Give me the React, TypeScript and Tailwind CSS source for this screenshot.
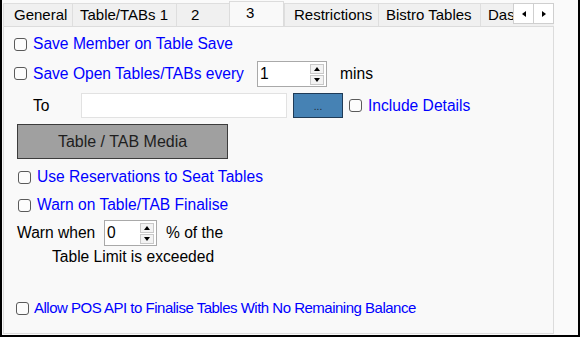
import React from 'react';

const font = { fontFamily: '"Liberation Sans", Arial, sans-serif' };

function Check() {
  return <span className="inline-block h-[13px] w-[13px] shrink-0 rounded-[3px] border border-[#5a5a5a] bg-[#fcfcfc]" />;
}

function Spin({ value, width }: { value: string; width: string }) {
  return (
    <div className={`relative flex h-[26px] ${width} items-center border border-[#a9a9a9] bg-white pl-[2px] text-black`}>
      {value}
      <div className="absolute right-[2px] top-[2px] flex flex-col gap-[1px]">
        <span className="flex h-[10px] w-[14px] items-center justify-center border border-[#c8c8c8] bg-[#f3f3f3]">
          <span className="h-0 w-0 border-x-[3px] border-b-[4px] border-x-transparent border-b-black" />
        </span>
        <span className="flex h-[10px] w-[14px] items-center justify-center border border-[#c8c8c8] bg-[#f3f3f3]">
          <span className="h-0 w-0 border-x-[3px] border-t-[4px] border-x-transparent border-t-black" />
        </span>
      </div>
    </div>
  );
}

const tabs = [
  { label: 'General', w: 'w-[69px]', pl: 'pl-[10px]' },
  { label: 'Table/TABs 1', w: 'w-[104px]', pl: 'pl-[7px]' },
  { label: '2', w: 'w-[53px]', pl: 'pl-[14px]' },
  { label: '3', w: 'w-[55px]', pl: 'pl-[16px]', active: true },
  { label: 'Restrictions', w: 'w-[94px]', pl: 'pl-[9px]' },
  { label: 'Bistro Tables', w: 'w-[102px]', pl: 'pl-[7px]' },
  { label: 'Dashboard', w: 'w-[90px]', pl: 'pl-[7px]' },
];

export default function App() {
  return (
    <div
      className="relative h-[337px] w-[580px] overflow-hidden border-x-2 border-b-2 border-black bg-[#fafafa] text-[15.6px]"
      style={font}
    >
      {/* Tabs */}
      <div className="relative z-10 flex h-[26px] w-[552px] overflow-hidden pl-px text-[15px]">
        {tabs.map((t) =>
          t.active ? (
            <div
              key={t.label}
              className={`mt-[1px] flex h-[26px] shrink-0 items-center ${t.w} ${t.pl} border-x border-t border-[#dcdcdc] bg-[#f9f9f9] pb-[2px] text-black`}
            >
              {t.label}
            </div>
          ) : (
            <div
              key={t.label}
              className={`mt-[3px] flex h-[23px] shrink-0 items-center ${t.w} ${t.pl} whitespace-nowrap border-l border-t border-[#dedede] bg-[#f0f0f0] text-black`}
            >
              {t.label}
            </div>
          )
        )}
        <div className="absolute left-[511px] top-[3px] flex h-[21px] w-[41px] border border-[#cfcfcf] bg-white">
          <span className="flex w-[20px] items-center justify-center border-r border-[#cfcfcf]">
            <span className="h-0 w-0 border-y-[3px] border-r-[4px] border-y-transparent border-r-black" />
          </span>
          <span className="flex flex-1 items-center justify-center">
            <span className="h-0 w-0 border-y-[3px] border-l-[4px] border-y-transparent border-l-black" />
          </span>
        </div>
      </div>

      {/* Panel */}
      <div className="ml-px h-[308px] w-[551px] border border-[#dcdcdc] bg-[#f9f9f9]">
        <div className="mt-[5px] flex h-[24px] items-center gap-[6px] pl-[10px] text-[#0000ff]">
          <Check />
          <span>Save Member on Table Save</span>
        </div>

        <div className="mt-[5px] flex h-[26px] items-center pl-[10px]">
          <div className="flex w-[243px] items-center gap-[6px] text-[#0000ff]">
            <Check />
            <span>Save Open Tables/TABs every</span>
          </div>
          <Spin value="1" width="w-[70px]" />
          <span className="ml-[13px] text-black">mins</span>
        </div>

        <div className="mt-[6px] flex h-[25px] items-center pl-[29px]">
          <span className="w-[48px] text-black">To</span>
          <div className="h-[25px] w-[206px] border border-[#e2e2e2] bg-white" />
          <div className="ml-[6px] flex h-[25px] w-[50px] items-end justify-center border border-[#1f3b57] bg-[#4682b4] pb-[5px] text-[10px] leading-none text-[#1b2633]">
            ...
          </div>
          <div className="ml-[6px] flex items-center gap-[6px] text-[#0000ff]">
            <Check />
            <span>Include Details</span>
          </div>
        </div>

        <div className="ml-[13px] mt-[6px] flex h-[35px] w-[211px] items-center justify-center border border-[#3c3c3c] bg-[#a0a0a0] text-[16px] text-[#1e1e1e]">
          Table / TAB Media
        </div>

        <div className="mt-[6px] flex h-[24px] items-center gap-[6px] pl-[14px] text-[#0000ff]">
          <Check />
          <span>Use Reservations to Seat Tables</span>
        </div>

        <div className="mt-[4px] flex h-[24px] items-center gap-[6px] pl-[14px] text-[#0000ff]">
          <Check />
          <span>Warn on Table/TAB Finalise</span>
        </div>

        <div className="mt-[3px] flex h-[26px] items-center pl-[13px] text-black">
          <span className="w-[87px]">Warn when</span>
          <Spin value="0" width="w-[53px]" />
          <span className="ml-[9px]">% of the</span>
        </div>

        <div className="mt-[1px] flex h-[20px] items-center pl-[48px] text-black">Table Limit is exceeded</div>

        <div className="mt-[29px] flex h-[24px] items-center gap-[5px] pl-[12px] text-[15px] tracking-[-0.5px] text-[#0000ff]">
          <Check />
          <span>Allow POS API to Finalise Tables With No Remaining Balance</span>
        </div>
      </div>
    </div>
  );
}
